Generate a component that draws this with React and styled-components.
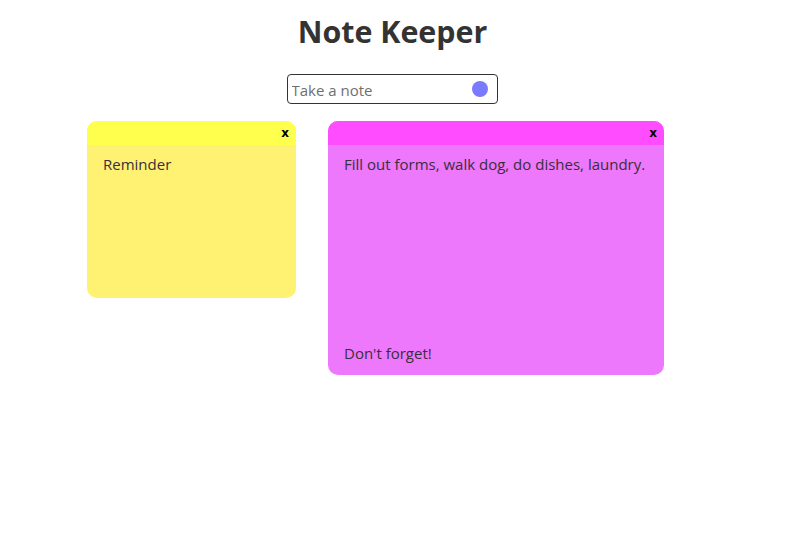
import React from "react";
import styled, { createGlobalStyle } from "styled-components";

const Global = createGlobalStyle`
  html, body { margin: 0; padding: 0; background: #fff; }
  body { font-family: "Open Sans", "Noto Sans", sans-serif; }
  * { box-sizing: border-box; }
`;

const Page = styled.div`
  display: flex;
  flex-direction: column;
  align-items: stretch;
`;

const Title = styled.h1`
  margin: 0;
  padding-top: 10px;
  height: 62px;
  text-align: center;
  font-size: 30.4px;
  font-weight: 700;
  color: #333;
  line-height: 44px;
`;

const SearchRow = styled.div`
  display: flex;
  justify-content: center;
  margin-top: 12px;
  padding-right: 1px;
`;

const SearchBox = styled.label`
  width: 211px;
  height: 30px;
  border: 1px solid #333;
  border-radius: 4px;
  display: flex;
  align-items: center;
  padding: 1px 9px 0 4px;
  gap: 6px;
`;

const Input = styled.input`
  flex: 1;
  min-width: 0;
  border: none;
  outline: none;
  font-family: inherit;
  font-size: 15px;
  color: #333;
  padding: 0;
  background: transparent;
  &::placeholder { color: #6f6f6f; }
`;

const Dot = styled.span`
  width: 16px;
  height: 16px;
  border-radius: 50%;
  background: #7a7aff;
  flex: none;
  margin-top: -1px;
`;

const Board = styled.div`
  display: flex;
  align-items: flex-start;
  gap: 32px;
  padding-left: 87px;
  margin-top: 17px;
`;

const Note = styled.div`
  width: ${(p) => p.$w}px;
  border-radius: 10px;
  overflow: hidden;
  background: ${(p) => p.$body};
`;

const NoteHeader = styled.div`
  height: 24px;
  background: ${(p) => p.$head};
  display: flex;
  justify-content: flex-end;
  align-items: center;
  padding: 0 7px 1px 0;
`;

const Close = styled.span`
  font-family: "DejaVu Sans", sans-serif;
  font-weight: 700;
  font-size: 12px;
  color: #000;
  line-height: 1;
`;

const NoteBody = styled.div`
  min-height: 153px;
  padding: 9px 16px 11px;
  font-size: 15px;
  line-height: 21px;
  color: #3a2e3a;
  white-space: pre-wrap;
`;

const notes = [
  { id: 1, w: 209, head: "#ffff4d", body: "#fff273", text: "Reminder" },
  {
    id: 2,
    w: 336,
    head: "#ff4cff",
    body: "#ed78fc",
    text: "Fill out forms, walk dog, do dishes, laundry.\n\n\n\n\n\n\n\n\nDon't forget!",
  },
];

export default function App() {
  return (
    <Page>
      <Global />
      <Title>Note Keeper</Title>
      <SearchRow>
        <SearchBox>
          <Input placeholder="Take a note" />
          <Dot />
        </SearchBox>
      </SearchRow>
      <Board>
        {notes.map((n) => (
          <Note key={n.id} $w={n.w} $body={n.body}>
            <NoteHeader $head={n.head}>
              <Close>x</Close>
            </NoteHeader>
            <NoteBody>{n.text}</NoteBody>
          </Note>
        ))}
      </Board>
    </Page>
  );
}
